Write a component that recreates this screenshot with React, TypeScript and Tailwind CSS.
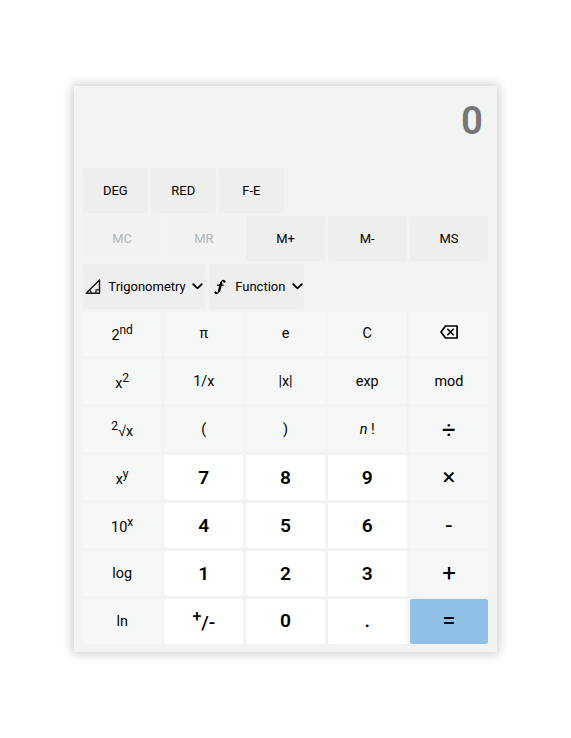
import type { ReactNode } from "react";

const Chevron = () => (
  <svg width="11" height="7" viewBox="0 0 11 7" fill="none" stroke="#000" strokeWidth="1.8" strokeLinecap="round" strokeLinejoin="round">
    <path d="M1.2 1.2 5.5 5.3 9.8 1.2" />
  </svg>
);

const TriangleIcon = () => (
  <svg width="16" height="16" viewBox="0 0 16 16" fill="none" stroke="#151515" strokeWidth="1.4" strokeLinejoin="round">
    <path d="M1.2 14.3 14.5 1v13.3z" />
    <path d="M4.6 10.9c1.2.8 1.7 1.9 1.7 3.4M11 14.3v-3.5h3.5" strokeWidth="1.2" />
  </svg>
);

const FunctionIcon = () => (
  <svg width="12" height="16" viewBox="0 0 12 16" fill="none" stroke="#000" strokeLinecap="round">
    <path d="M10.4 2C9 .9 7.7 1.6 7.2 3.6L5.1 11.8c-.5 2.1-2 3.1-3.7 2.3" strokeWidth="1.2" />
    <path d="M7.2 3.8 5.2 11.6" strokeWidth="2.3" />
    <path d="M3.4 6.1h5.9" strokeWidth="1.3" />
    <circle cx="10.3" cy="2.6" r=".8" fill="#000" strokeWidth=".8" />
    <circle cx="1.6" cy="13.5" r=".8" fill="#000" strokeWidth=".8" />
  </svg>
);

const BackspaceIcon = () => (
  <svg className="mb-[4px]" width="18" height="14" viewBox="0 0 18 14" fill="none" stroke="#000" strokeWidth="1.7">
    <path d="M5.5 1h11.6v12H5.5L1 7z" strokeLinejoin="round" />
    <path d="m7.3 3.7 6.4 6.6m0-6.6-6.4 6.6" strokeWidth="1.5" />
  </svg>
);

const Sup = ({ children }: { children: ReactNode }) => (
  <sup className="static align-super text-[12px] leading-[12px]">{children}</sup>
);

type Kind = "fn" | "num" | "op" | "eq";
const styles: Record<Kind, string> = {
  fn: "bg-[#f6f8f8] text-[14.4px]",
  num: "bg-white pb-px text-[19.2px] font-semibold",
  op: "bg-[#f6f8f8] pb-[0.5px] text-[24px]",
  eq: "bg-[#91c0e6] text-[24px]",
};

const keys: [ReactNode, Kind][] = [
  [<span>2<Sup>nd</Sup></span>, "fn"], ["π", "fn"], ["e", "fn"], ["C", "fn"], [<BackspaceIcon />, "fn"],
  [<span>x<Sup>2</Sup></span>, "fn"], ["1/x", "fn"], ["|x|", "fn"], ["exp", "fn"], ["mod", "fn"],
  [<span><Sup>2</Sup><span className="font-['Liberation_Sans',sans-serif]">√</span>x</span>, "fn"], ["(", "fn"], [")", "fn"], [<span><i>n</i> !</span>, "fn"], ["÷", "op"],
  [<span>x<Sup>y</Sup></span>, "fn"], ["7", "num"], ["8", "num"], ["9", "num"], ["×", "op"],
  [<span>10<Sup>x</Sup></span>, "fn"], ["4", "num"], ["5", "num"], ["6", "num"], ["-", "op"],
  ["log", "fn"], ["1", "num"], ["2", "num"], ["3", "num"], ["+", "op"],
  ["ln", "fn"], [<span className="font-medium"><sup className="static align-super text-[16px] leading-[18px]">+</sup>/-</span>, "num"], ["0", "num"], [".", "num"], ["=", "eq"],
];

const base = "flex items-center justify-center rounded-[2px] h-[45px]";

export default function App() {
  return (
    <div className="h-[738px] bg-white pt-[86px] pl-[74px] font-['Roboto',sans-serif] text-black">
      <main className="h-[566px] w-[423px] bg-[#f1f4f3] pl-[8.8px] shadow-[0_0_10px_2px_rgba(0,0,0,0.2)]">
        <div className="h-[82px] pt-[11px] pr-[14px] text-right text-[38.4px] leading-[48px] font-semibold text-[#757575]">0</div>
        <div className="flex h-12 gap-[3px] text-[13px]">
          {["DEG", "RED", "F-E"].map((t) => (
            <button key={t} className={`${base} w-[65px] bg-[#eee]`}>{t}</button>
          ))}
        </div>
        <div className="grid h-12 w-[405.5px] grid-cols-5 gap-[3px] text-[13px]">
          {["MC", "MR", "M+", "M-", "MS"].map((t, i) => (
            <button key={t} className={`${base} ${i < 2 ? "bg-[#f0f3f2] text-[#b5b6b6]" : "bg-[#eee]"}`}>{t}</button>
          ))}
        </div>
        <div className="flex h-[47.5px] gap-[3.5px] text-[13px]">
          <button className={`${base} w-[122.5px] bg-[#eee]`}>
            <TriangleIcon /><span className="mr-[6.5px] ml-[7.5px]">Trigonometry</span><Chevron />
          </button>
          <button className={`${base} w-[95px] bg-[#eee] pl-[4px]`}>
            <FunctionIcon /><span className="mr-[6.5px] ml-[9.5px]">Function</span><Chevron />
          </button>
        </div>
        <div className="grid w-[405.5px] grid-cols-5 gap-[3px]">
          {keys.map(([label, kind], i) => (
            <button key={i} className={`flex h-[44.93px] items-center justify-center rounded-[2px] leading-[normal] ${styles[kind]}`}>{label}</button>
          ))}
        </div>
      </main>
    </div>
  );
}
